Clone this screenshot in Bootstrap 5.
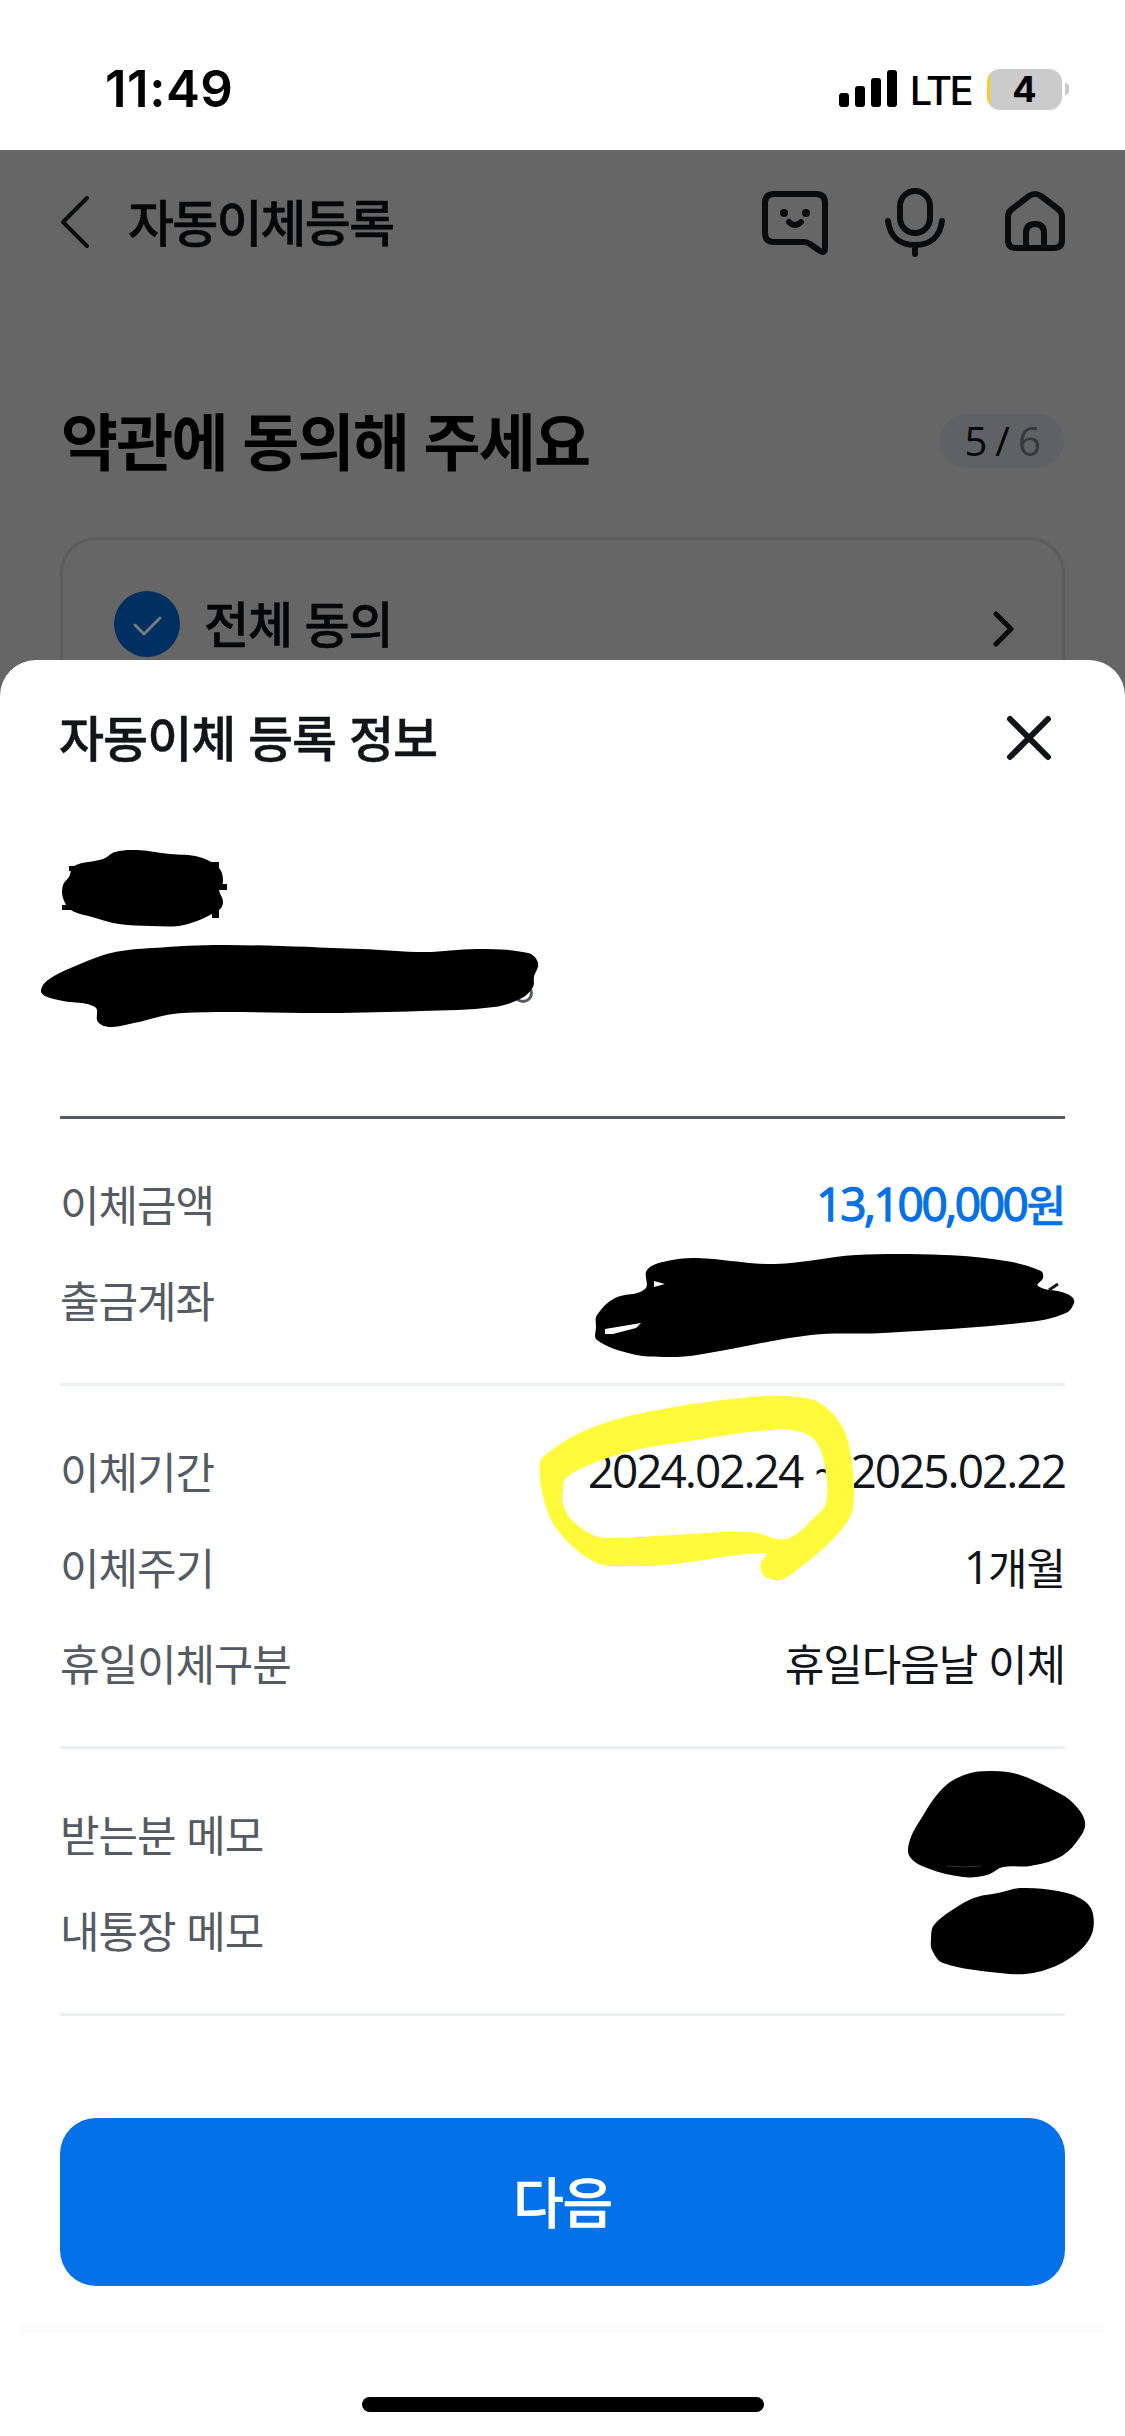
<!DOCTYPE html>
<html lang="ko">
<head>
<meta charset="utf-8">
<meta name="viewport" content="width=device-width, initial-scale=1">
<title>자동이체등록</title>
<link href="https://cdn.jsdelivr.net/npm/bootstrap@5.3.0/dist/css/bootstrap.min.css" rel="stylesheet">
<style>
body{font-family:"Noto Sans CJK KR",sans-serif;color:#111519;background:#fff;line-height:1}
.phone{width:1125px;height:2436px;overflow:hidden}
.status{height:150px;padding:32px 56px 0 105px;font-family:Inter,sans-serif;color:#000}
.clock{font-size:51px;font-weight:600;letter-spacing:.5px;padding-top:31px}
.indicators{height:50px;margin-top:32px}
.lte{font-size:40px;font-weight:500;letter-spacing:-2.6px;margin:3px 16px 0 13px}
.batt{width:75px;height:41px;border-radius:13px;background:linear-gradient(90deg,#f9ce22 3px,#cbcbcb 3px);font-size:36px;font-weight:700}
.batt-tip{width:4px;height:12px;border-radius:0 6px 6px 0;background:#cbcbcb;margin-left:3px}
.dimmed{background:#666;color:#050607}
.behind{height:510px;overflow:hidden}
.topbar{height:144px;padding:0 60px}
.bar-title,.agree-txt,.sheet-title,.next{-webkit-text-stroke:.5px currentColor}
.bar-title{font-size:50px;font-weight:500;letter-spacing:-1.8px;margin:-5px 0 0 38px}
.head-row{height:243px;padding:50px 61px 0}
.head-title{font-size:62px;font-weight:700;letter-spacing:-1.8px;margin:-2px 0 0;color:#000}
.step-pill{width:124px;height:54px;border-radius:27px;background:#5f6165;font-family:"Open Sans",sans-serif;font-size:40px;letter-spacing:-1.2px;margin-top:0}
.step-pill i{font-style:normal;color:#35383d}
.agree{margin:0 60px;height:180px;border:3px solid #5a5c5e;border-radius:36px;padding:0 48px 0 51px}
.agree-all{margin-top:-7px}
.agree-txt{font-size:49px;font-weight:500;letter-spacing:-1.1px;margin:-4px 0 0 24px}
.agree-arrow{margin-top:4px}
.sheet{background:#fff;color:#111519;border-radius:36px 36px 0 0;height:1776px;padding:0 60px}
.sheet-head{height:156px}
.sheet-title{font-size:49px;font-weight:500;letter-spacing:-1px;margin:-4px 0 0 -1px}
.owner{height:303px;border-bottom:3px solid #555b62}
.group{border-bottom:3px solid #ebeef3;padding:36px 0}
.line-item{height:96px;font-size:43px}
.line-item dt{font-weight:400;letter-spacing:-1.1px;color:#555b63}
.line-item dd{margin:0;letter-spacing:-1.1px;font-weight:400;display:flex;align-items:center}
.num{font-family:"Open Sans",sans-serif;font-size:46px;letter-spacing:-2px;font-weight:400;word-spacing:2px}
.line-item .amount{color:#0471e9;font-weight:500;-webkit-text-stroke:.4px currentColor}
.amount .num{letter-spacing:-2.4px;-webkit-text-stroke:1.3px currentColor}
.next{height:168px;margin-top:102px;border-radius:36px;background:#0471e9;color:#fff;font-size:55px;font-weight:500;letter-spacing:-1.3px;border:0;padding-bottom:11px}
.footer-edge{height:12px;margin:35px -40px 0;background:linear-gradient(#fff,#fafafa)}
.home-bar{width:402px;height:15px;border-radius:8px;background:#000;margin:64px auto 0}
.ink{left:0;top:0;pointer-events:none}
</style>
<script src="https://cdn.jsdelivr.net/npm/bootstrap@5.3.0/dist/js/bootstrap.bundle.min.js"></script>
</head>
<body>
<div class="phone position-relative d-flex flex-column">
  <header class="status d-flex justify-content-between">
    <div class="clock">11:49</div>
    <div class="indicators d-flex align-items-center">
      <svg width="58" height="38" viewBox="0 0 58 38"><rect y="23" width="10" height="14" rx="3"/><rect x="16" y="16" width="10" height="21" rx="3"/><rect x="32" y="8" width="10" height="29" rx="3"/><rect x="48" width="10" height="37" rx="3"/></svg>
      <span class="lte">LTE</span>
      <span class="batt d-flex align-items-center justify-content-center">4</span><span class="batt-tip"></span>
    </div>
  </header>

  <div class="dimmed flex-grow-1">
    <section class="behind">
      <nav class="topbar d-flex align-items-center justify-content-between">
        <div class="d-flex align-items-center">
          <svg width="30" height="54" viewBox="0 0 30 54" fill="none" stroke="#0a0c0e" stroke-width="4" stroke-linecap="round" stroke-linejoin="round"><path d="M27 3 3 27l24 24"/></svg>
          <span class="bar-title">자동이체등록</span>
        </div>
        <svg width="304" height="72" viewBox="761 187 304 72" fill="none" stroke="#090b0d" stroke-width="6" stroke-linecap="round" stroke-linejoin="round">
          <path d="M774 195h42q9 0 9 9v45q0 6-5 3l-10-7q-3-2-6-2h-30q-9 0-9-9v-30q0-9 9-9z"/>
          <path d="M789 223q6 6 12 0"/><g fill="#090b0d" stroke="none"><circle cx="784" cy="214" r="4"/><circle cx="806" cy="214" r="4"/></g>
          <rect x="900" y="192" width="30" height="42" rx="15"/><path d="M888 222c2 16 12 24 27 24s25-8 27-24M915 246v9"/>
          <path d="M1029 197q6-4 12 0l17 13q4 3 4 8v23q0 8-8 8h-38q-8 0-8-8v-23q0-5 4-8zM1026 248v-14q0-9 9-9t9 9v14"/>
        </svg>
      </nav>
      <div class="head-row d-flex align-items-center justify-content-between">
        <h1 class="head-title">약관에 동의해 주세요</h1>
        <span class="step-pill d-flex align-items-center justify-content-center"><span>5 / <i>6</i></span></span>
      </div>
      <div class="agree d-flex align-items-center justify-content-between">
        <div class="agree-all d-flex align-items-center">
          <svg width="66" height="66" viewBox="0 0 66 66"><circle cx="33" cy="33" r="33" fill="#002f62"/><path d="m21 34 9 9 16-16" fill="none" stroke="#777b80" stroke-width="3" stroke-linecap="round" stroke-linejoin="round"/></svg>
          <span class="agree-txt">전체 동의</span>
        </div>
        <svg class="agree-arrow" width="22" height="38" viewBox="0 0 22 38" fill="none" stroke="#08090a" stroke-width="5" stroke-linecap="round" stroke-linejoin="round"><path d="m4 4 15 15L4 34"/></svg>
      </div>
    </section>

    <main class="sheet">
      <div class="sheet-head d-flex align-items-center justify-content-between">
        <h2 class="sheet-title">자동이체 등록 정보</h2>
        <svg class="me-3" width="44" height="44" viewBox="0 0 44 44" fill="none" stroke="#111519" stroke-width="6" stroke-linecap="round" overflow="visible"><path d="m5 3 38 38M43 3 5 41"/></svg>
      </div>
      <div class="owner"></div>
      <dl class="group m-0">
        <div class="line-item d-flex align-items-center justify-content-between"><dt>이체금액</dt><dd class="amount"><span class="num">13,100,000</span>원</dd></div>
        <div class="line-item d-flex align-items-center justify-content-between"><dt>출금계좌</dt><dd></dd></div>
      </dl>
      <dl class="group m-0">
        <div class="line-item d-flex align-items-center justify-content-between"><dt>이체기간</dt><dd><span class="num">2024.02.24 ~ 2025.02.22</span></dd></div>
        <div class="line-item d-flex align-items-center justify-content-between"><dt>이체주기</dt><dd><span class="num">1</span>개월</dd></div>
        <div class="line-item d-flex align-items-center justify-content-between"><dt>휴일이체구분</dt><dd>휴일다음날 이체</dd></div>
      </dl>
      <dl class="group m-0">
        <div class="line-item d-flex align-items-center justify-content-between"><dt>받는분 메모</dt><dd></dd></div>
        <div class="line-item d-flex align-items-center justify-content-between"><dt>내통장 메모</dt><dd></dd></div>
      </dl>
      <button class="next btn w-100 d-flex align-items-center justify-content-center" type="button">다음</button>
      <div class="footer-edge"></div>
      <div class="home-bar"></div>
    </main>
  </div>

  <!-- Pen strokes over the sheet -->
  <svg class="ink position-absolute" width="1125" height="2436" viewBox="0 0 1125 2436">
    <circle cx="523" cy="993" r="8.500" fill="none" stroke="#555b63" stroke-width="3"/>
    <path data-pts="103,859 115,852 136,850 170,854 199,857 219,868 223,882 219,889 223,902 219,910 184,925 151,926 119,924 92,917 71,910 63,898 63,885 69,877 74,866"/>
    <path d="M69 866h8v5h-8zM212 862h7v20h-7zM218 884h9v6h-9zM62 905h9v5h-9zM212 900h7v18h-7z"/>
    <path data-pts="41,990 48,980 73,967 111,953 153,948 226,945 360,949 425,952 478,949 528,953 538,963 534,977 533,987 522,998 494,1007 421,1011 329,1013 182,1013 134,1023 111,1027 98,1022 95,1007 63,1001 45,996"/>
    <path data-pts="596,1327 597,1315 615,1298 645,1289 647,1270 667,1261 697,1258 775,1264 856,1255 944,1255 1006,1261 1041,1271 1043,1278 1038,1286 1062,1292 1072,1297 1074,1303 1066,1313 1029,1322 883,1333 811,1335 697,1355 667,1357 632,1354 597,1340"/>
    <path d="m605 1329 36-6-5 5-23 6h-8zM654 1281l11 3-11 3z" fill="#fff"/>
    <path d="m1049 1290 9-6" stroke="#111519" stroke-width="3"/>
    <path fill="#fffb3c" fill-rule="evenodd" data-pts="540,1463 549,1452 586,1430 647,1412 751,1397 798,1397 823,1405 844,1430 852,1463 854,1497 850,1517 829,1543 786,1578 775,1580 763,1575 761,1563 766,1553 674,1564 636,1566 597,1563 559,1532 544,1500|566,1478 597,1462 636,1450 690,1441 759,1431 798,1431 817,1443 826,1473 826,1503 817,1515 786,1539 751,1532 674,1535 605,1538 589,1533 570,1518 563,1503 563,1490"/>
    <path data-pts="909,1843 919,1822 943,1788 967,1774 993,1771 1020,1775 1057,1792 1072,1802 1085,1822 1078,1840 1060,1857 1030,1866 1003,1867 987,1875 963,1877 927,1868 910,1857"/>
    <path d="M947 1866q15 2 34 0" fill="none" stroke="#333" stroke-width="1"/>
    <path data-pts="931,1940 934,1925 960,1905 977,1897 998,1893 1020,1888 1058,1891 1083,1900 1093,1914 1090,1938 1067,1960 1033,1973 1000,1973 943,1963 932,1950"/>
  </svg>
</div>
<script>
// Turn each list of points into a smooth closed curve (Catmull-Rom to Bezier).
document.querySelectorAll('[data-pts]').forEach(function(p){
  p.setAttribute('d', p.dataset.pts.split('|').map(function(s){
    var a = s.split(' ').map(function(t){return t.split(',').map(Number)}), n = a.length, d = 'M' + a[0];
    for (var i = 0; i < n; i++) {
      var p0 = a[(i+n-1)%n], p1 = a[i], p2 = a[(i+1)%n], p3 = a[(i+2)%n];
      var L = Math.hypot(p2[0]-p1[0], p2[1]-p1[1]);
      var u = [p2[0]-p0[0], p2[1]-p0[1]], v = [p3[0]-p1[0], p3[1]-p1[1]];
      var ku = .35*L/Math.hypot(u[0],u[1]), kv = .35*L/Math.hypot(v[0],v[1]);
      d += 'C' + [p1[0]+u[0]*ku, p1[1]+u[1]*ku, p2[0]-v[0]*kv, p2[1]-v[1]*kv, p2[0], p2[1]].map(function(x){return x.toFixed(1)});
    }
    return d + 'Z';
  }).join(''));
});
</script>
</body>
</html>
